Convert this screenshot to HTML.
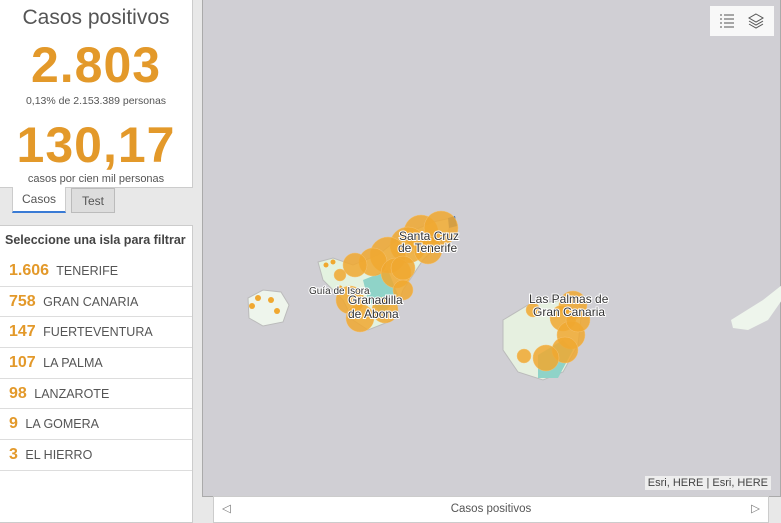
<!DOCTYPE html>
<html><head><meta charset="utf-8"><style>
*{margin:0;padding:0;box-sizing:border-box}
body{width:781px;height:523px;background:#e8e8e8;font-family:"Liberation Sans",sans-serif;position:relative;overflow:hidden}
.card{position:absolute;left:0;top:0;width:193px;height:188px;background:#fff;border:1px solid #ccc;border-left:none;border-top:none;text-align:center}
.t{font-size:21px;color:#555;position:absolute;top:6px;width:100%}
.big{color:#e3992a;font-size:50px;font-weight:bold;position:absolute;width:100%;letter-spacing:1px}
.sm{font-size:10.5px;color:#555;position:absolute;width:100%}
.tab{position:absolute;top:187px;height:26px;font-size:12px;color:#555;text-align:center;line-height:24px}
.list{position:absolute;left:0;top:225px;width:193px;height:298px;background:#fff;border:1px solid #ccc;border-left:none}
.hd{font-size:12.5px;font-weight:bold;color:#444;padding:7px 0 0 5px;height:30px}
.row{height:30.7px;border-bottom:1px solid #ddd;padding-left:9px;line-height:30px;font-size:12.5px;color:#555}
.row b{color:#e3992a;font-size:16px;margin-right:4px}
.map{position:absolute;left:202px;top:0;width:579px;height:497px;background:#d0cfd4;border:1px solid #aaa;border-top:none}
.bar{position:absolute;left:213px;top:496px;width:556px;height:27px;background:#fff;border:1px solid #ccc;font-size:11.5px;color:#555;text-align:center;line-height:24px}
</style></head><body>
<div class="card">
<div class="t">Casos positivos</div>
<div class="big" style="top:36px">2.803</div>
<div class="sm" style="top:95px">0,13% de 2.153.389 personas</div>
<div class="big" style="top:116px">130,17</div>
<div class="sm" style="top:173px;font-size:11px">casos por cien mil personas</div>
</div>
<div class="tab" style="left:12px;width:54px;background:#fff;border:1px solid #ccc;border-top:none;border-bottom:2px solid #3a7bd5">Casos</div>
<div class="tab" style="left:71px;width:44px;background:#ddd;border:1px solid #bbb;top:188px;height:25px">Test</div>
<div class="list">
<div class="hd">Seleccione una isla para filtrar</div>
<div class="row"><b>1.606</b> TENERIFE</div>
<div class="row"><b>758</b> GRAN CANARIA</div>
<div class="row"><b>147</b> FUERTEVENTURA</div>
<div class="row"><b>107</b> LA PALMA</div>
<div class="row"><b>98</b> LANZAROTE</div>
<div class="row"><b>9</b> LA GOMERA</div>
<div class="row"><b>3</b> EL HIERRO</div>
</div>
<div class="map">
<svg width="579" height="497" style="position:absolute;left:0;top:0">
<path d="M45 298 L60 290 L78 292 L86 305 L80 322 L60 326 L46 318Z" fill="#eef5ec" stroke="#bbb"/>
<circle cx="55" cy="298" r="3" fill="#f0a830"/><circle cx="68" cy="300" r="3" fill="#f0a830"/><circle cx="49" cy="306" r="3" fill="#f0a830"/><circle cx="74" cy="311" r="3" fill="#f0a830"/>
<path d="M115 262 L130 258 L150 265 L175 255 L200 235 L230 222 L248 218 L245 235 L220 260 L200 290 L190 320 L165 330 L150 320 L140 300 L120 280Z" fill="#e3f2e0" stroke="#bbb"/>
<path d="M160 280 L185 270 L195 295 L180 315 L165 300Z" fill="#8fd3c8"/>
<path d="M245 218 L252 216 L254 226 L246 228Z" fill="#3b6fb8"/>
<g fill="#f0a830" fill-opacity="0.85" stroke="#f5c270" stroke-width="0.5">
<circle cx="218" cy="232" r="17"/><circle cx="238" cy="228" r="17"/><circle cx="205" cy="245" r="18"/><circle cx="185" cy="255" r="18"/><circle cx="170" cy="262" r="14"/><circle cx="225" cy="250" r="14"/><circle cx="193" cy="273" r="15"/><circle cx="152" cy="265" r="12"/><circle cx="200" cy="268" r="12"/><circle cx="147" cy="300" r="14"/><circle cx="157" cy="318" r="14"/><circle cx="182" cy="310" r="13"/><circle cx="200" cy="290" r="10"/><circle cx="137" cy="275" r="6"/>
</g>
<g fill="#f0a830"><circle cx="123" cy="265" r="2.5"/><circle cx="130" cy="262" r="2.5"/><circle cx="137" cy="288" r="2.5"/></g>
<path d="M300 320 L325 305 L360 300 L378 318 L375 345 L360 372 L340 380 L315 372 L300 350Z" fill="#e6f0e0" stroke="#bbb"/>
<path d="M335 355 L360 340 L370 350 L355 378 L335 378Z" fill="#8fd3c8"/>
<g fill="#f0a830" fill-opacity="0.85" stroke="#f5c270" stroke-width="0.5">
<circle cx="370" cy="305" r="14"/><circle cx="360" cy="318" r="13"/><circle cx="368" cy="335" r="14"/><circle cx="362" cy="350" r="13"/><circle cx="343" cy="358" r="13"/><circle cx="330" cy="310" r="7"/><circle cx="321" cy="356" r="7"/><circle cx="375" cy="320" r="12"/>
</g>
<path d="M528 320 L560 300 L579 285 L579 300 L565 320 L545 330 L530 328Z" fill="#eef5ec"/>
<g font-family="Liberation Sans,sans-serif" font-size="12" fill="#333" stroke="#fff" stroke-width="2" paint-order="stroke">
<text x="196" y="240">Santa Cruz</text><text x="195" y="252">de Tenerife</text>
<text x="106" y="294" font-size="10">Guía de Isora</text>
<text x="145" y="304">Granadilla</text><text x="145" y="318">de Abona</text>
<text x="326" y="303">Las Palmas de</text><text x="330" y="316">Gran Canaria</text>
</g>
</svg>
<div style="position:absolute;left:507px;top:6px;width:64px;height:30px;background:#f8f8f8"></div>
<svg width="16" height="16" style="position:absolute;left:516px;top:13px" stroke="#555" fill="none"><path d="M1 2h2M1 6h2M1 10h2M1 14h2M5 2h10M5 6h10M5 10h10M5 14h10"/></svg>
<svg width="16" height="16" style="position:absolute;left:545px;top:13px" stroke="#555" fill="none"><path d="M8 1L15 5L8 9L1 5Z M1 8L8 12L15 8 M1 11L8 15L15 11"/></svg>
<div style="position:absolute;right:9px;top:476px;background:#eee;font-size:11px;color:#444;padding:1px 3px">Esri, HERE | Esri, HERE</div>
</div>
<div class="bar"><span style="position:absolute;left:8px;color:#777">◁</span>Casos positivos<span style="position:absolute;right:8px;color:#777">▷</span></div>
</body></html>
